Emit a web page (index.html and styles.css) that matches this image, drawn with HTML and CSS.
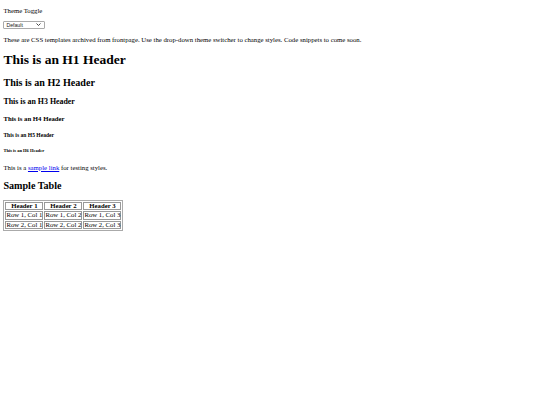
FILE: index.html
```html
<!DOCTYPE html>
<html>
<head>
<meta charset="utf-8">
<title>Theme Toggle</title>
<link rel="stylesheet" href="styles.css">
</head>
<body class="page">
<p class="label">Theme Toggle</p>
<div class="select-wrap">
<select class="theme-select"><option>Default</option></select>
<svg class="select-arrow" width="5" height="3" viewBox="0 0 5 3"><path d="M0.5 0.5 L2.5 2.5 L4.5 0.5" fill="none" stroke="#333" stroke-width="0.9"/></svg>
</div>
<p class="text">These are CSS templates archived from frontpage. Use the drop-down theme switcher to change styles. Code snippets to come soon.</p>
<h1 class="h1">This is an H1 Header</h1>
<h2 class="h2">This is an H2 Header</h2>
<h3 class="h3">This is an H3 Header</h3>
<h4 class="h4">This is an H4 Header</h4>
<h5 class="h5">This is an H5 Header</h5>
<h6 class="h6">This is an H6 Header</h6>
<p class="text">This is a <a class="link" href="#">sample link</a> for testing styles.</p>
<h2 class="h2">Sample Table</h2>
<table class="tbl">
<tr><th class="cell">Header 1</th><th class="cell">Header 2</th><th class="cell">Header 3</th></tr>
<tr><td class="cell">Row 1, Col 1</td><td class="cell">Row 1, Col 2</td><td class="cell">Row 1, Col 3</td></tr>
<tr><td class="cell">Row 2, Col 1</td><td class="cell">Row 2, Col 2</td><td class="cell">Row 2, Col 3</td></tr>
</table>
</body>
</html>
```
FILE: styles.css
```css
html { background: #fff; }
.page {
  margin: 3.4px;
  font-family: "Liberation Serif", "Times New Roman", serif;
  font-size: 6.75px;
  color: #000;
}
.label { margin: 3.4px 0 6.75px; }
.text { margin: 7px 0; }
.select-wrap {
  position: relative;
  width: 42px;
  height: 8px;
}
.theme-select {
  display: block;
  -webkit-appearance: none;
  appearance: none;
  font-family: "Liberation Sans", Arial, sans-serif;
  font-size: 5.2px;
  line-height: 6px;
  height: 8px;
  width: 42px;
  margin: 0;
  padding: 0 0 0 2px;
  border: 1px solid #aaa;
  border-radius: 1px;
  background: #fff;
  color: #222;
}
.select-arrow {
  position: absolute;
  right: 4px;
  top: 2.5px;
  pointer-events: none;
}
.h1 { font-size: 13.5px; margin: 9.05px 0; }
.h2 { font-size: 10.125px; margin: 8.9px 0; }
.h3 { font-size: 7.9px; margin: 7.9px 0; }
.h4 { font-size: 6.75px; margin: 9.5px 0; }
.h5 { font-size: 5.6px; margin: 9.9px 0; }
.h6 { font-size: 4.52px; margin: 10.5px 0; }
.link { color: #00e; }
.tbl {
  border: 1px solid #aaa;
  border-spacing: 1px;
  border-collapse: separate;
  font-size: 6.75px;
}
.cell {
  border: 1px solid #999;
  padding: 0;
  line-height: 6.6px;
}
```
